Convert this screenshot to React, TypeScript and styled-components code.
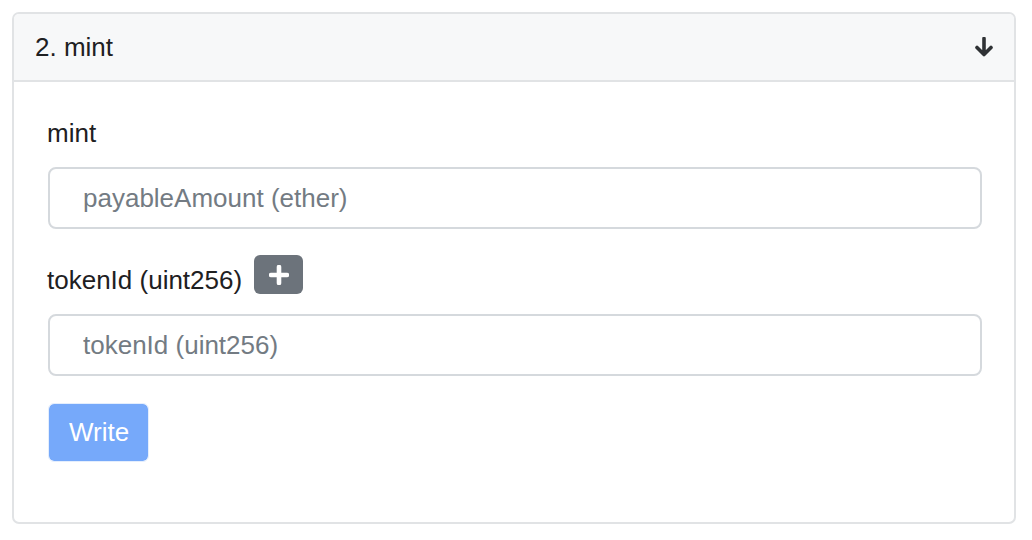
import styled, { createGlobalStyle } from "styled-components";

const GlobalStyle = createGlobalStyle`
  * {
    box-sizing: border-box;
  }
  body {
    margin: 0;
    background: #fff;
    font-family: "Liberation Sans", Arial, sans-serif;
    color: #1e2022;
  }
`;

const Page = styled.div`
  padding: 12px 16px 16px 12px;
`;
const Card = styled.div`
  border: 2px solid #e1e3e5;
  border-radius: 7px;
  overflow: hidden;
  background: #fff;
`;
const CardHeader = styled.div`
  display: flex;
  align-items: center;
  justify-content: space-between;
  height: 68px;
  padding: 0 21px;
  background: #f7f8f9;
  border-bottom: 2px solid #e1e3e5;
  font-size: 26px;
  color: #1e2022;
`;
const CardBody = styled.div`
  padding: 32px 32px 60px 34px;
`;
const FormGroup = styled.div`
  margin-bottom: 26px;
`;
const LabelRow = styled.div`
  display: flex;
  align-items: flex-start;
  gap: 12px;
  margin-bottom: 14px;
`;
const Label = styled.label<{ $offset?: number }>`
  font-size: 26px;
  line-height: 39px;
  margin-top: ${(p) => p.$offset ?? 0}px;
  margin-left: -1px;
  color: #1e2022;
`;
const Input = styled.input`
  display: block;
  width: 100%;
  height: 62px;
  padding: 0 20px 0 33px;
  border: 2px solid #d5d9dd;
  border-radius: 8px;
  font-family: inherit;
  font-size: 26px;
  color: #1e2022;
  background: #fff;
  outline: none;

  &::placeholder {
    color: #737b83;
  }
`;
const AddButton = styled.button`
  display: flex;
  align-items: center;
  justify-content: center;
  width: 49px;
  height: 39px;
  padding: 0;
  border: none;
  border-radius: 6px;
  background: #6c737b;
  cursor: pointer;
`;
const WriteButton = styled.button`
  margin-top: 1px;
  padding: 10px 19px 10px 20px;
  border: 1px solid #e4eefd;
  border-radius: 6px;
  background: #76a9fa;
  background-clip: padding-box;
  color: #fff;
  font-family: inherit;
  font-size: 26px;
  line-height: 37px;
`;

function ArrowDown() {
  return (
    <svg width="18" height="20" viewBox="0 0 18 20" fill="none">
      <path
        d="M9 1.5V17M2 10.5L9 17.5L16 10.5"
        stroke="#2f3235"
        strokeWidth="3.6"
        strokeLinecap="round"
        strokeLinejoin="round"
      />
    </svg>
  );
}

function Plus() {
  return (
    <svg width="20" height="20" viewBox="0 0 20 20" fill="none">
      <path
        d="M10 2V18M2 10H18"
        stroke="#fff"
        strokeWidth="4.6"
        strokeLinecap="round"
      />
    </svg>
  );
}

export default function App() {
  return (
    <Page>
      <GlobalStyle />
      <Card>
        <CardHeader>
          <span>2. mint</span>
          <ArrowDown />
        </CardHeader>
        <CardBody>
          <FormGroup>
            <LabelRow>
              <Label>mint</Label>
            </LabelRow>
            <Input placeholder="payableAmount (ether)" />
          </FormGroup>
          <FormGroup>
            <LabelRow>
              <Label $offset={6}>tokenId (uint256)</Label>
              <AddButton type="button">
                <Plus />
              </AddButton>
            </LabelRow>
            <Input placeholder="tokenId (uint256)" />
          </FormGroup>
          <WriteButton type="button">Write</WriteButton>
        </CardBody>
      </Card>
    </Page>
  );
}
